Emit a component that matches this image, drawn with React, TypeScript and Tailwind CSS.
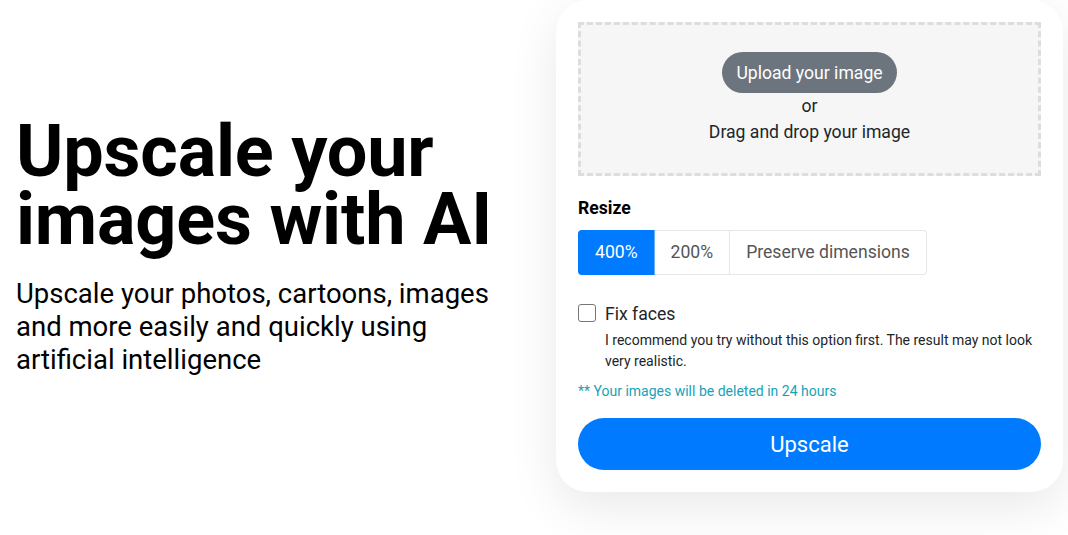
import React from "react";

export default function App() {
  return (
    <div className="w-[1068px] h-[535px] bg-white overflow-hidden flex font-['Roboto',_'Liberation_Sans',_sans-serif] text-[#212529]">
      <div className="w-[556px] pl-4 pt-[118px] shrink-0">
        <h1 className="text-[72px] leading-[68px] font-bold text-black tracking-[-0.2px]">
          Upscale your images with AI
        </h1>
        <p className="mt-[23px] text-[27.5px] leading-[33px] text-black w-[490px]">
          Upscale your photos, cartoons, images and more easily and quickly using artificial intelligence
        </p>
      </div>
      <div className="w-[507px] h-[492px] shrink-0 rounded-[32px] bg-white shadow-[0_15px_50px_rgba(0,0,0,0.09)] p-[22px] flex flex-col">
        <div className="h-[154px] shrink-0 border-[3px] border-dashed border-[#dddddd] bg-[#f6f6f6] flex flex-col items-center pt-[27px]">
          <button className="h-[41px] shrink-0 px-[14px] rounded-full bg-[#6c757d] text-white text-[17.6px] leading-[26px]">
            Upload your image
          </button>
          <div className="text-[17.6px] leading-[26px]">or</div>
          <div className="text-[17.6px] leading-[26px]">Drag and drop your image</div>
        </div>
        <div className="mt-[19px] shrink-0 text-[17.6px] leading-[27px] font-bold text-black">Resize</div>
        <div className="mt-[8px] shrink-0 flex">
          <div className="h-[45px] px-4 flex items-center bg-[#007bff] text-white text-[17.6px] rounded-l-[4px] border border-[#007bff] border-r-[#6aaeff]">400%</div>
          <div className="h-[45px] px-4 flex items-center text-[#555] text-[17.6px] border border-l-0 border-[#e4e7ea]">200%</div>
          <div className="h-[45px] px-4 flex items-center text-[#555] text-[17.6px] border border-l-0 border-[#e4e7ea] rounded-r-[4px]">Preserve dimensions</div>
        </div>
        <div className="mt-[28px] shrink-0 flex gap-[9px]">
          <div className="w-[18px] h-[18px] mt-[1px] rounded-[3px] border-[1.5px] border-[#767676] bg-white shrink-0"></div>
          <div className="flex flex-col">
            <div className="text-[17.6px] leading-[22px] text-[#212529]">Fix faces</div>
            <div className="mt-[5px] text-[14px] leading-[21px] text-[#212529]">
              I recommend you try without this option first. The result may not look very realistic.
            </div>
          </div>
        </div>
        <div className="mt-[9px] shrink-0 text-[14px] leading-[21px] text-[#17a2b8]">** Your images will be deleted in 24 hours</div>
        <button className="mt-[16px] shrink-0 h-[52px] w-full rounded-full bg-[#007bff] text-white text-[22px]">Upscale</button>
      </div>
    </div>
  );
}
